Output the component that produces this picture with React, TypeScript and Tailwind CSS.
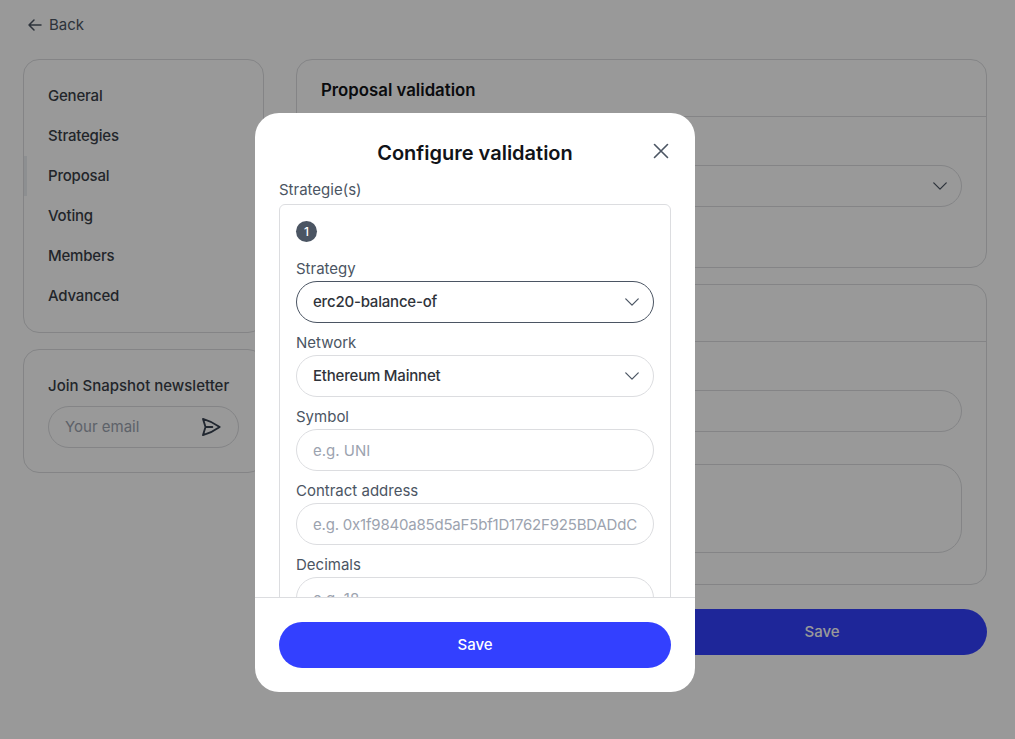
import React from 'react';
import { HiOutlineArrowLeft, HiOutlineChevronDown, HiOutlinePaperAirplane, HiOutlineXMark } from 'react-icons/hi2';

const navItems = ['General', 'Strategies', 'Proposal', 'Voting', 'Members', 'Advanced'];

const SelectBox: React.FC<{ value?: string; active?: boolean }> = ({ value, active }) => (
  <div
    className={`flex h-[42px] items-center justify-between rounded-full border pl-4 pr-[11px] ${
      active ? 'border-[#4b5563]' : 'border-[#dcdde0]'
    }`}
  >
    <span className="font-medium tracking-[-0.2px] text-[#2f333a]">{value}</span>
    <HiOutlineChevronDown size={20} className="text-[#4b5563]" />
  </div>
);

const TextField: React.FC<{ placeholder: string; tight?: boolean }> = ({ placeholder, tight }) => (
  <input
    placeholder={placeholder}
    className={`block h-[42px] w-full shrink-0 rounded-full border border-[#dcdde0] px-4 outline-none placeholder:text-[#9ca3af] ${
      tight ? 'tracking-[-0.2px]' : ''
    }`}
  />
);

const Field: React.FC<{ label: string; children: React.ReactNode }> = ({ label, children }) => (
  <div className="mt-[9px] first:mt-0">
    <div className="mb-[1px] h-[22px] leading-[22px] text-[#4b5563]">{label}</div>
    {children}
  </div>
);

export default function App() {
  return (
    <div className="relative h-[739px] w-[1015px] overflow-hidden bg-white font-['Inter',sans-serif] text-[15px]">
      {/* page behind the dialog */}
      <div className="px-[23px]">
        <div className="flex h-[59px] items-start pt-[15px]">
          <div className="ml-1 flex h-5 items-center gap-[6px] text-[#4b5563]">
            <HiOutlineArrowLeft size={16} strokeWidth={2.25} />
            <span>Back</span>
          </div>
        </div>

        <div className="flex gap-8">
          <div className="flex w-[241px] shrink-0 flex-col gap-4">
            <div className="rounded-[16px] border border-[#dcdde0] py-4">
              {navItems.map((item) => (
                <div
                  key={item}
                  className={`flex h-10 items-center border-l-[3px] pl-[21px] font-medium tracking-[-0.2px] text-[#3a3f48] ${
                    item === 'Proposal' ? 'border-[#eceef2]' : 'border-transparent'
                  }`}
                >
                  {item}
                </div>
              ))}
            </div>
            <div className="h-[124px] rounded-[16px] border border-[#dcdde0] px-6 pt-[26px]">
              <div className="h-5 font-medium leading-5 text-[#3a3f48]">Join Snapshot newsletter</div>
              <div className="mt-[10px] flex h-[42px] items-center justify-between rounded-full border border-[#dcdde0] pl-4 pr-[16px]">
                <span className="text-[#9ca3af]">Your email</span>
                <HiOutlinePaperAirplane size={22} strokeWidth={2} className="text-[#374151]" />
              </div>
            </div>
          </div>

          <div className="w-[691px] shrink-0">
            <div className="h-[209px] rounded-[16px] border border-[#dcdde0]">
              <div className="flex h-[57px] items-center border-b border-[#dcdde0] px-6 pt-[6px] text-[16.8px] font-semibold text-[#111318]">
                Proposal validation
              </div>
              <div className="mt-[48px] px-6">
                <SelectBox />
              </div>
            </div>
            <div className="mt-4 h-[301px] rounded-[16px] border border-[#dcdde0]">
              <div className="h-[57px] border-b border-[#dcdde0]" />
              <div className="mx-6 mt-[48px] h-[42px] rounded-full border border-[#dcdde0]" />
              <div className="mx-6 mt-8 h-[89px] rounded-[24px] border border-[#dcdde0]" />
            </div>
            <div className="mt-6 flex justify-end">
              <div className="flex h-[46px] w-[330px] items-center justify-center rounded-full bg-[#3340ff] font-medium text-white">
                Save
              </div>
            </div>
          </div>
        </div>
      </div>

      {/* dialog */}
      <div className="absolute inset-0 flex items-start bg-black/40 pl-[255px] pt-[113px]">
        <div className="flex h-[579px] w-[440px] flex-col overflow-hidden rounded-[24px] bg-white">
          <div className="relative flex h-[66px] shrink-0 items-start justify-center pt-[26px]">
            <h2 className="text-[20px] font-semibold leading-7 text-[#111318]">Configure validation</h2>
            <HiOutlineXMark size={26} className="absolute right-[21px] top-[25px] text-[#4b5563]" />
          </div>

          <div className="min-h-0 flex-1 overflow-hidden px-6">
            <div className="h-[25px] pt-[1px] leading-5 text-[#4b5563]">Strategie(s)</div>
            <div className="rounded-[6px] border border-[#dcdde0] px-4 pb-4 pt-4">
              <div className="mb-4 flex h-[21px] w-[21px] items-center justify-center rounded-full bg-[#4b5563] text-xs font-medium text-white">
                1
              </div>
              <Field label="Strategy">
                <SelectBox value="erc20-balance-of" active />
              </Field>
              <Field label="Network">
                <SelectBox value="Ethereum Mainnet" />
              </Field>
              <Field label="Symbol">
                <TextField placeholder="e.g. UNI" />
              </Field>
              <Field label="Contract address">
                <TextField placeholder="e.g. 0x1f9840a85d5aF5bf1D1762F925BDADdC" tight />
              </Field>
              <Field label="Decimals">
                <TextField placeholder="e.g. 18" />
              </Field>
            </div>
          </div>

          <div className="shrink-0 border-t border-[#dcdde0] p-6">
            <div className="flex h-[46px] items-center justify-center rounded-full bg-[#3340ff] font-medium text-white">
              Save
            </div>
          </div>
        </div>
      </div>
    </div>
  );
}
